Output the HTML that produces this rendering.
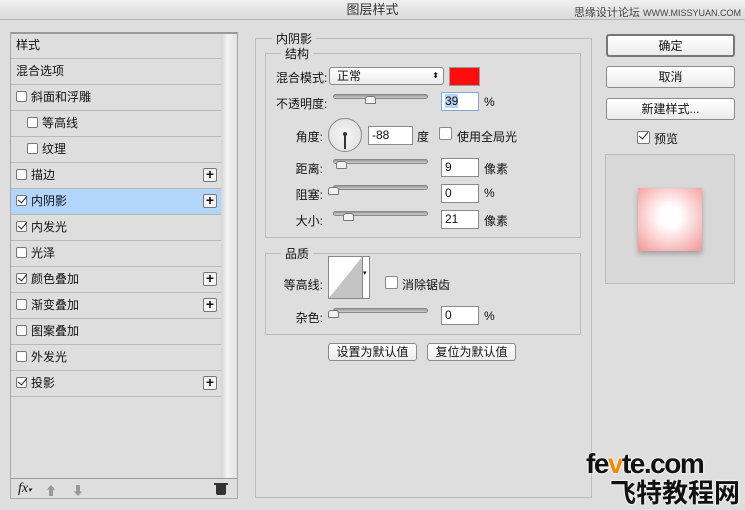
<!DOCTYPE html>
<html><head><meta charset="utf-8"><style>
*{margin:0;padding:0;box-sizing:border-box}
body{width:745px;height:510px;background:#dedede;font-family:"Liberation Sans","Noto Sans CJK SC",sans-serif;font-size:12px;color:#111;position:relative;overflow:hidden}
.a{position:absolute}
.title{left:0;top:0;width:745px;height:20px;background:linear-gradient(#f0f0f0,#dadada);border-bottom:1px solid #b4b4b4;text-align:center;line-height:20px;font-size:13px;color:#333}
.row{position:absolute;left:11px;width:210px;height:26px;border-bottom:1px solid #b8b8b8;line-height:25px;padding-left:5px}
.cb{display:inline-block;width:11px;height:11px;border:1px solid #777;background:#fff;border-radius:2px;vertical-align:-1px;margin-right:4px;position:relative}
.cb.on:after{content:"";position:absolute;left:3px;top:-2px;width:4px;height:8px;border:solid #222;border-width:0 1.5px 1.5px 0;transform:rotate(40deg)}
.plus{position:absolute;right:4px;top:5px;width:14px;height:14px;border:1px solid #777;background:#f6f6f6;border-radius:2px;font-size:14px;line-height:11px;text-align:center;font-weight:bold}
.btn{position:absolute;border:1px solid #8a8a8a;border-radius:3px;background:linear-gradient(#fff,#ececec);text-align:center;font-size:12px}
.inp{position:absolute;background:#fff;border:1px solid #8a8a8a;height:19px;padding-left:3px;line-height:17px}
.lbl{position:absolute;text-align:right;width:60px}
.trk{position:absolute;height:5px;border-radius:3px;background:linear-gradient(#999,#ccc);border:1px solid #888;width:95px;left:333px}
.th{position:absolute;width:11px;height:8px;background:#f2f2f2;border:1px solid #777;border-radius:3px 3px 1px 1px}
.grp{position:absolute;border:1px solid #bcbcbc}
.leg{position:absolute;background:#dedede;padding:0 4px}
</style></head><body>
<div class="a title">图层样式</div>
<div class="a" style="right:4px;top:4px;font-size:11px;color:#444">思缘设计论坛 <span style="font-size:9px">WWW.MISSYUAN.COM</span></div>

<div class="a" style="left:10px;top:32px;width:228px;height:467px;border:1px solid #a8a8a8;border-top:2px solid #999"></div>
<div class="a" style="left:221px;top:34px;width:16px;height:444px;background:linear-gradient(90deg,#d4d4d4,#f4f4f4 40%,#e2e2e2)"></div>
<div class="row" style="top:33px">样式</div>
<div class="row" style="top:59px">混合选项</div>
<div class="row" style="top:85px"><span class="cb"></span>斜面和浮雕</div>
<div class="row" style="top:111px;padding-left:16px"><span class="cb"></span>等高线</div>
<div class="row" style="top:137px;padding-left:16px"><span class="cb"></span>纹理</div>
<div class="row" style="top:163px"><span class="cb"></span>描边<span class="plus">+</span></div>
<div class="row" style="top:189px;background:#b1d5fb"><span class="cb on"></span>内阴影<span class="plus">+</span></div>
<div class="row" style="top:215px"><span class="cb on"></span>内发光</div>
<div class="row" style="top:241px"><span class="cb"></span>光泽</div>
<div class="row" style="top:267px"><span class="cb on"></span>颜色叠加<span class="plus">+</span></div>
<div class="row" style="top:293px"><span class="cb"></span>渐变叠加<span class="plus">+</span></div>
<div class="row" style="top:319px"><span class="cb"></span>图案叠加</div>
<div class="row" style="top:345px"><span class="cb"></span>外发光</div>
<div class="row" style="top:371px"><span class="cb on"></span>投影<span class="plus">+</span></div>
<div class="a" style="left:11px;top:478px;width:226px;height:1px;background:#999"></div>
<div class="a" style="left:18px;top:481px;font-style:italic;font-family:'Liberation Serif',serif;font-size:14px">fx<span style="font-size:7px">▾</span></div>
<div class="a" style="left:45px;top:482px;color:#999;font-size:12px">⬆</div>
<div class="a" style="left:72px;top:482px;color:#999;font-size:12px">⬇</div>
<div class="a" style="left:216px;top:485px;width:10px;height:10px;background:#333;border-radius:0 0 2px 2px"></div>
<div class="a" style="left:214px;top:483px;width:14px;height:2px;background:#333"></div>

<div class="grp" style="left:255px;top:38px;width:337px;height:460px"></div>
<div class="leg" style="left:272px;top:30px">内阴影</div>
<div class="grp" style="left:265px;top:53px;width:316px;height:185px"></div>
<div class="leg" style="left:281px;top:45px">结构</div>
<div class="a" style="left:276px;top:69px">混合模式:</div>
<div class="btn" style="left:329px;top:67px;width:115px;height:18px;text-align:left;padding-left:7px;line-height:16px">正常<span style="position:absolute;right:4px;top:0;font-size:8px">⬍</span></div>
<div class="a" style="left:449px;top:67px;width:31px;height:19px;background:#ff0d0d;border:1px solid #999"></div>
<div class="a" style="left:276px;top:95px">不透明度:</div>
<div class="trk" style="top:94px"></div><div class="th" style="left:365px;top:96px"></div>
<div class="inp" style="left:441px;top:92px;width:38px;border-color:#7fa9d9"><span style="background:#b4d3f6">39</span></div>
<div class="a" style="left:484px;top:95px">%</div>
<div class="lbl" style="left:263px;top:128px">角度:</div>
<div class="a" style="left:328px;top:118px;width:34px;height:34px;border-radius:50%;border:1px solid #888;background:radial-gradient(#f6f6f6,#ddd)"></div>
<div class="a" style="left:344px;top:133px;width:2px;height:16px;background:#333"></div>
<div class="a" style="left:343px;top:132px;width:4px;height:4px;border-radius:50%;background:#333"></div>
<div class="inp" style="left:368px;top:126px;width:45px">-88</div>
<div class="a" style="left:417px;top:128px">度</div>
<div class="a" style="left:439px;top:127px;width:13px;height:13px;border:1px solid #888;background:#fff;border-radius:2px"></div>
<div class="a" style="left:457px;top:128px">使用全局光</div>
<div class="lbl" style="left:263px;top:160px">距离:</div>
<div class="trk" style="top:159px"></div><div class="th" style="left:336px;top:161px"></div>
<div class="inp" style="left:441px;top:158px;width:38px">9</div>
<div class="a" style="left:484px;top:160px">像素</div>
<div class="lbl" style="left:263px;top:186px">阻塞:</div>
<div class="trk" style="top:185px"></div><div class="th" style="left:328px;top:187px"></div>
<div class="inp" style="left:441px;top:184px;width:38px">0</div>
<div class="a" style="left:484px;top:186px">%</div>
<div class="lbl" style="left:263px;top:212px">大小:</div>
<div class="trk" style="top:211px"></div><div class="th" style="left:343px;top:213px"></div>
<div class="inp" style="left:441px;top:210px;width:38px">21</div>
<div class="a" style="left:484px;top:212px">像素</div>

<div class="grp" style="left:265px;top:253px;width:316px;height:82px"></div>
<div class="leg" style="left:281px;top:245px">品质</div>
<div class="lbl" style="left:263px;top:276px">等高线:</div>
<div class="a" style="left:328px;top:256px;width:42px;height:43px;border:1px solid #888;background:#fff;overflow:hidden">
<svg width="33" height="41" style="position:absolute;left:0;top:0"><polygon points="0,41 33,0 33,41" fill="#c4c4c4"/></svg>
<div style="position:absolute;left:33px;top:0;width:1px;height:41px;background:#888"></div>
<div style="position:absolute;left:34px;top:12px;font-size:7px">▾</div></div>
<div class="a" style="left:385px;top:276px;width:13px;height:13px;border:1px solid #888;background:#fff;border-radius:2px"></div>
<div class="a" style="left:402px;top:276px">消除锯齿</div>
<div class="lbl" style="left:263px;top:309px">杂色:</div>
<div class="trk" style="top:308px"></div><div class="th" style="left:328px;top:310px"></div>
<div class="inp" style="left:441px;top:306px;width:38px">0</div>
<div class="a" style="left:484px;top:309px">%</div>
<div class="btn" style="left:328px;top:343px;width:89px;height:18px;line-height:16px">设置为默认值</div>
<div class="btn" style="left:427px;top:343px;width:89px;height:18px;line-height:16px">复位为默认值</div>

<div class="btn" style="left:606px;top:34px;width:129px;height:23px;line-height:20px;border:2px solid #777">确定</div>
<div class="btn" style="left:606px;top:66px;width:129px;height:22px;line-height:20px">取消</div>
<div class="btn" style="left:606px;top:98px;width:129px;height:22px;line-height:20px">新建样式...</div>
<div class="a" style="left:637px;top:130px"><span class="cb on" style="width:13px;height:13px"></span>预览</div>
<div class="a" style="left:605px;top:154px;width:130px;height:130px;border:1px solid #bbb;background:#d8d8d8"></div>
<div class="a" style="left:638px;top:188px;width:64px;height:63px;background:radial-gradient(circle at 50% 45%,#fff 22%,#fbd2d2 55%,#f49494 100%);box-shadow:0 3px 5px rgba(0,0,0,.25)"></div>

<div class="a" style="left:586px;top:448px;font-size:28px;font-weight:bold;color:#111;letter-spacing:-1.5px;text-shadow:0 0 2px #fff,0 0 2px #fff">fe<span style="color:#f08a00">v</span>te.com</div>
<div class="a" style="left:610px;top:473px;font-size:26px;font-weight:bold;color:#111;text-shadow:0 0 2px #fff,0 0 2px #fff">飞特教程网</div>
</body></html>
